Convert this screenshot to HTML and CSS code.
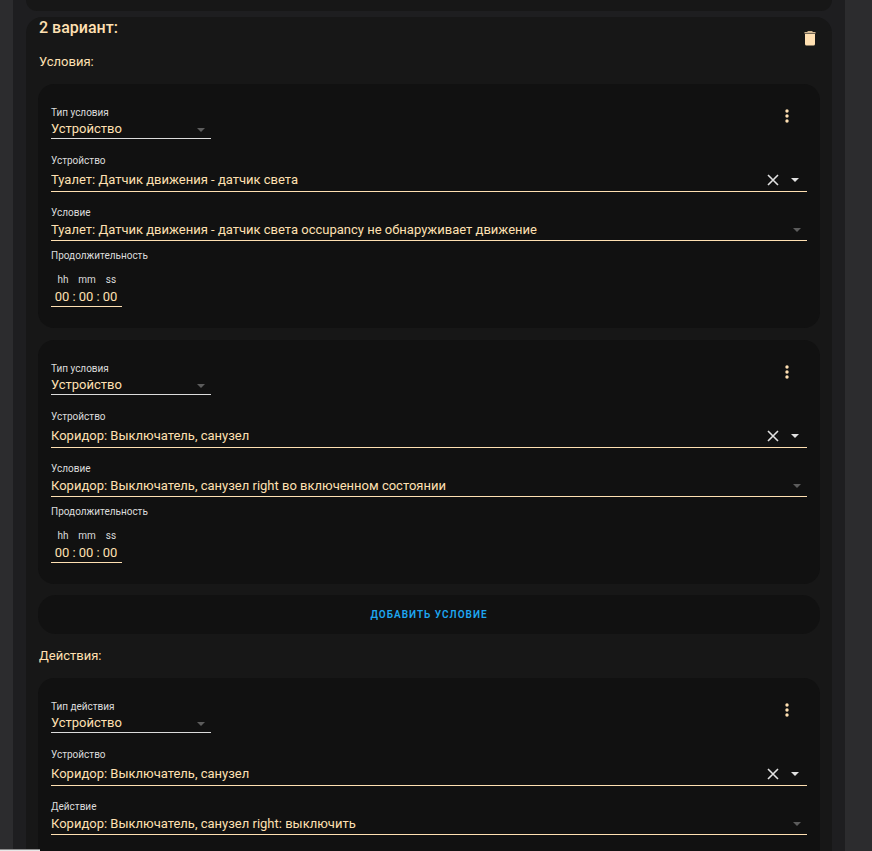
FILE: index.html
```html
<!DOCTYPE html>
<html lang="ru">
<head>
<meta charset="utf-8">
<meta name="viewport" content="width=device-width, initial-scale=1">
<title>Автоматизация</title>
<link rel="stylesheet" href="styles.css">
</head>
<body>
<svg class="sprite" aria-hidden="true">
  <symbol id="dots" viewBox="0 0 4 14"><circle cx="2" cy="2" r="1.7"/><circle cx="2" cy="7" r="1.7"/><circle cx="2" cy="12" r="1.7"/></symbol>
  <symbol id="close" viewBox="0 0 12 12"><path d="M1 1l10 10M11 1L1 11" fill="none" stroke="currentColor" stroke-width="1.6"/></symbol>
  <symbol id="caret" viewBox="0 0 8 4"><path d="M0 0h8L4 4z"/></symbol>
  <symbol id="trash" viewBox="0 0 12 16"><path d="M4 1h4l1 1h2.500v1.500H.5V2H3z" opacity=".8"/><path d="M1 4h10V14q0 1.500-1.500 1.500h-7Q1 15.500 1 14z"/></symbol>
</svg>
<main class="page">
  <div class="panel">
    <div class="option option-end"></div>
    <section class="option">
      <header class="option-head">
        <div>
          <h2 class="title">2 вариант:</h2>
          <h3 class="subtitle">Условия:</h3>
        </div>
        <button class="icon-button delete" type="button" aria-label="Удалить"><svg width="12" height="16"><use href="#trash"/></svg></button>
      </header>

      <div class="cards">
        <article class="card">
          <div class="card-head">
            <div class="field short">
              <label for="type1">Тип условия</label>
              <div class="control"><select id="type1"><option>Устройство</option></select><svg class="caret" width="8" height="4"><use href="#caret"/></svg></div>
            </div>
            <button class="icon-button menu" type="button" aria-label="Меню"><svg width="4" height="14"><use href="#dots"/></svg></button>
          </div>
          <div class="field">
            <label for="device1">Устройство</label>
            <div class="control combo"><input id="device1" type="text" value="Туалет: Датчик движения - датчик света"><button class="icon-button" type="button" aria-label="Очистить"><svg width="12" height="12"><use href="#close"/></svg></button><button class="icon-button" type="button" aria-label="Открыть"><svg width="8" height="4"><use href="#caret"/></svg></button></div>
          </div>
          <div class="field">
            <label for="cond1">Условие</label>
            <div class="control wide"><select id="cond1"><option>Туалет: Датчик движения - датчик света occupancy не обнаруживает движение</option></select><svg class="caret" width="8" height="4"><use href="#caret"/></svg></div>
          </div>
          <fieldset class="duration">
            <legend>Продолжительность</legend>
            <div class="units"><label for="h1">hh</label><label for="m1">mm</label><label for="s1">ss</label></div>
            <div class="time"><input id="h1" value="00"><span>:</span><input id="m1" value="00"><span>:</span><input id="s1" value="00"></div>
          </fieldset>
        </article>

        <article class="card">
          <div class="card-head">
            <div class="field short">
              <label for="type2">Тип условия</label>
              <div class="control"><select id="type2"><option>Устройство</option></select><svg class="caret" width="8" height="4"><use href="#caret"/></svg></div>
            </div>
            <button class="icon-button menu" type="button" aria-label="Меню"><svg width="4" height="14"><use href="#dots"/></svg></button>
          </div>
          <div class="field">
            <label for="device2">Устройство</label>
            <div class="control combo"><input id="device2" type="text" value="Коридор: Выключатель, санузел"><button class="icon-button" type="button" aria-label="Очистить"><svg width="12" height="12"><use href="#close"/></svg></button><button class="icon-button" type="button" aria-label="Открыть"><svg width="8" height="4"><use href="#caret"/></svg></button></div>
          </div>
          <div class="field">
            <label for="cond2">Условие</label>
            <div class="control wide"><select id="cond2"><option>Коридор: Выключатель, санузел right во включенном состоянии</option></select><svg class="caret" width="8" height="4"><use href="#caret"/></svg></div>
          </div>
          <fieldset class="duration">
            <legend>Продолжительность</legend>
            <div class="units"><label for="h2">hh</label><label for="m2">mm</label><label for="s2">ss</label></div>
            <div class="time"><input id="h2" value="00"><span>:</span><input id="m2" value="00"><span>:</span><input id="s2" value="00"></div>
          </fieldset>
        </article>
      </div>
      <button class="add" type="button">Добавить условие</button>

      <h3 class="subtitle">Действия:</h3>
      <article class="card">
        <div class="card-head">
          <div class="field short">
            <label for="type3">Тип действия</label>
            <div class="control"><select id="type3"><option>Устройство</option></select><svg class="caret" width="8" height="4"><use href="#caret"/></svg></div>
          </div>
          <button class="icon-button menu" type="button" aria-label="Меню"><svg width="4" height="14"><use href="#dots"/></svg></button>
        </div>
        <div class="field">
          <label for="device3">Устройство</label>
          <div class="control combo"><input id="device3" type="text" value="Коридор: Выключатель, санузел"><button class="icon-button" type="button" aria-label="Очистить"><svg width="12" height="12"><use href="#close"/></svg></button><button class="icon-button" type="button" aria-label="Открыть"><svg width="8" height="4"><use href="#caret"/></svg></button></div>
        </div>
        <div class="field">
          <label for="act3">Действие</label>
          <div class="control wide"><select id="act3"><option>Коридор: Выключатель, санузел right: выключить</option></select><svg class="caret" width="8" height="4"><use href="#caret"/></svg></div>
        </div>
      </article>
    </section>
  </div>
  <div class="status"></div>
</main>
</body>
</html>
```
FILE: styles.css
```css
* { box-sizing: border-box; }

body {
  margin: 0;
  background: #2c2c2e;
  color: #ffe0b2;
  font-family: Roboto, "Liberation Sans", sans-serif;
  font-size: 13px;
}

.sprite { display: none; }

.page {
  position: relative;
  height: 100vh;
  overflow: hidden;
}

.panel {
  min-height: 100%;
  margin: 0 27px 0 13px;
  padding: 0 13px;
  background: #1e1e20;
}

.option {
  padding: 0 12px 13px;
  border-radius: 16px;
  background: #171717;
}

.option-end {
  height: 11px;
  padding: 0;
  margin-bottom: 6px;
  border-radius: 0 0 14px 14px;
}

.option-head {
  display: flex;
  justify-content: space-between;
  align-items: flex-start;
}

.title, .subtitle { margin: 0; padding-left: 1px; }
.title { padding-bottom: 1px; font-size: 16px; font-weight: 500; line-height: 22px; }
.subtitle { padding-top: 14px; padding-bottom: 14px; font-size: 13px; font-weight: 400; line-height: 16px; }

.icon-button {
  display: flex;
  align-items: center;
  justify-content: center;
  width: 20px;
  height: 20px;
  padding: 0;
  border: 0;
  background: none;
  color: inherit;
  fill: currentColor;
}

.delete { margin-top: 11px; }
.menu { margin-right: 10px; }

.cards { display: flex; flex-direction: column; gap: 12px; }

.card {
  display: flex;
  flex-direction: column;
  padding: 22px 13px 21px;
  border-radius: 16px;
  background: #111111;
}

.card-head { display: flex; justify-content: space-between; align-items: flex-start; }

.field { margin-bottom: 14px; }
.short { width: 160px; margin-bottom: 15px; }

label, legend {
  display: block;
  color: #dcdcdc;
  font-size: 10px;
  line-height: 14px;
}

input, select {
  width: 100%;
  min-width: 0;
  margin: 0;
  padding: 0;
  border: 0;
  outline: 0;
  border-radius: 0;
  appearance: none;
  background: none;
  color: inherit;
  font: inherit;
  line-height: 18px;
}

.control {
  position: relative;
  display: flex;
  align-items: center;
  height: 19px;
  border-bottom: 1px solid #dcdcdc;
}

.control.combo, .control.wide { border-color: #ffe0b2; }
.control.combo { height: 24px; }
.combo .icon-button { flex: none; color: #e1e1e1; }
.combo .icon-button + .icon-button { width: 24px; }
.control.wide { height: 21px; }

.caret {
  position: absolute;
  right: 6px;
  top: 8px;
  fill: #5c5c5c;
  pointer-events: none;
}

.duration { align-self: flex-start; margin: -6px 0 0; padding: 0; border: 0; }
.duration legend { padding: 0; }
.units { display: flex; width: 72px; padding-top: 10px; }
.units label { width: 24px; text-align: center; }

.time {
  display: flex;
  width: 71px;
  height: 20px;
  padding-left: 1px;
  border-bottom: 1px solid #ffe0b2;
}

.time input { width: 20px; text-align: center; }
.time span { width: 4px; text-align: center; line-height: 20px; }

.add {
  display: block;
  width: 100%;
  height: 39px;
  margin-top: 11px;
  padding: 0;
  border: 0;
  border-radius: 18px;
  background: #111111;
  color: #1ea7f2;
  font-family: inherit;
  font-size: 10px;
  font-weight: 600;
  letter-spacing: 1px;
  text-transform: uppercase;
}

.status {
  position: absolute;
  left: 0;
  bottom: 0;
  width: 40px;
  height: 2px;
  background: linear-gradient(#8c8c8c 50%, #e8e8e8 50%);
}
```
